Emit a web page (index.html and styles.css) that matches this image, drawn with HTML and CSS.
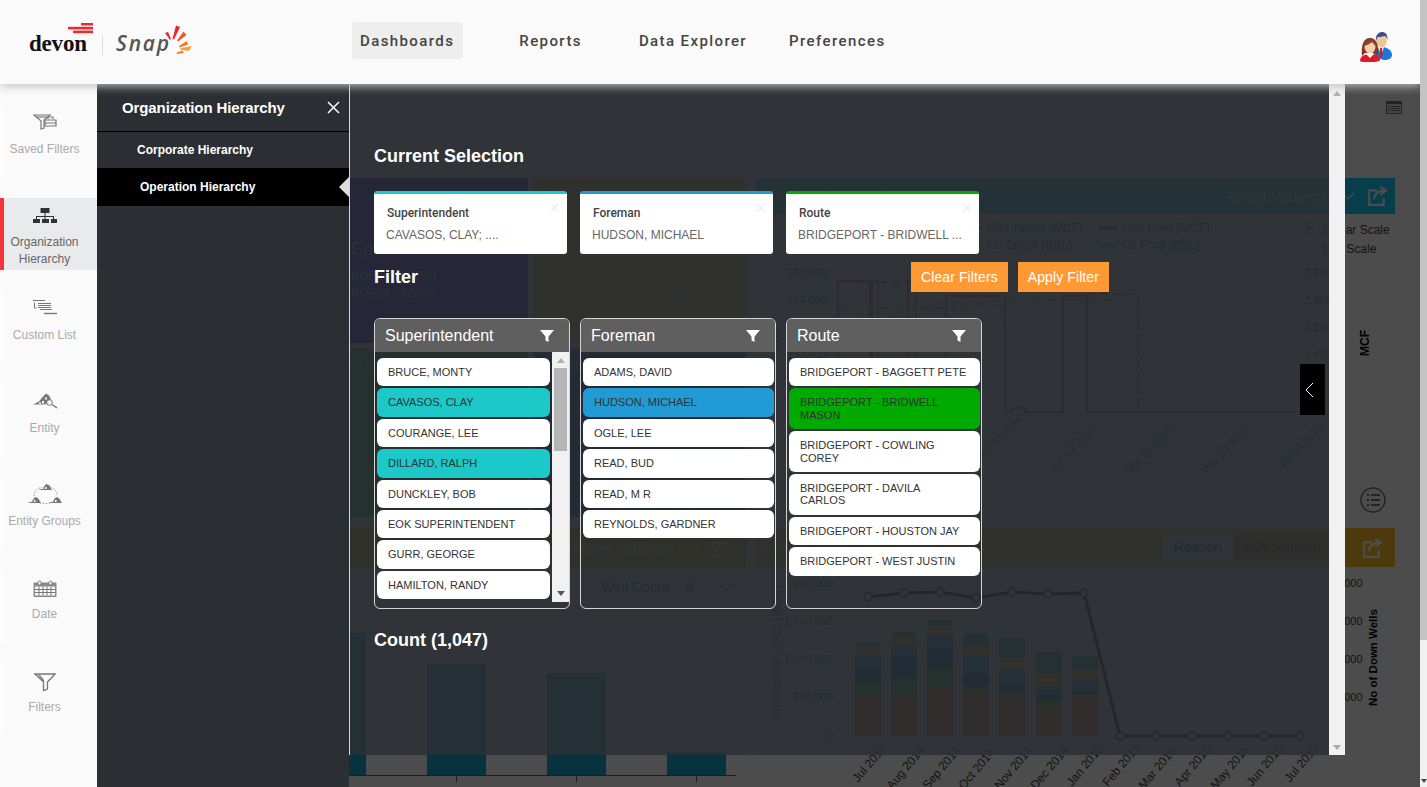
FILE: index.html
```html
<!DOCTYPE html>
<html lang="en">
<head>
  <meta charset="UTF-8">
  <title>Devon Snap</title>
  <link rel="stylesheet" href="styles.css">
</head>
<body>

<div class="app">
  <header class="topbar">
    <div class="logo">
      <div class="logo-devon">
        <svg class="logo-bars" width="26" height="11" viewBox="69 23 26 11">
          <rect x="82" y="23" width="12" height="2.5" fill="#ee2a2e"/>
          <rect x="69" y="26.8" width="25" height="2.6" fill="#ee2a2e"/>
          <rect x="74" y="30.6" width="20" height="2.6" fill="#ee2a2e"/>
        </svg>
        <span>devon</span>
      </div>
      <div class="logo-sep"></div>
      <span class="logo-snap">Snap</span>
      <svg class="logo-burst" width="28" height="31" viewBox="164 25 28 31">
        <path d="M165 33l3-1 3 7-1 1z" fill="#e8262c"/>
        <path d="M176 25.500l4 1.500-6 12.500-1.500-.5z" fill="#e8262c"/>
        <path d="M183.500 31.500l3 3.500-8.500 6.500-1-1z" fill="#f4552c"/>
        <path d="M186.500 41l2 3.500-9 3-.5-1.500z" fill="#f77a2c"/>
        <path d="M191.500 46l-2.500 5-9-1.500v-1z" fill="#fb9a3c"/>
        <path d="M183 50.500l.5 2.500-6.500 1-.5-1.500z" fill="#f77a2c"/>
      </svg>
    </div>
    <nav class="nav">
      <a class="nav-item active">Dashboards</a>
      <a class="nav-item nav-reports">Reports</a>
      <a class="nav-item nav-explorer">Data Explorer</a>
      <a class="nav-item nav-prefs">Preferences</a>
    </nav>
    <svg class="user-icon" width="34" height="32" viewBox="0 0 34 32">
      <path d="M14 26c0-7 4-10 8-10 6 0 11 3 11 8 0 3-3 5-8 5z" fill="#1f78d8"/>
      <path d="M19 16l3 9 3-9z" fill="#f2f2f2"/>
      <path d="M21 17h2l.6 8-1.600 2-1.600-2z" fill="#c8202c"/>
      <ellipse cx="22.500" cy="10" rx="5.200" ry="6.400" fill="#eec68f"/>
      <path d="M17 10c-1-6 3-9 6-9s6 2 5.500 8c-1-3-2-4-3-4-3 1-6 1-7 1z" fill="#3d4a8c"/>
      <path d="M1 30c0-5 5-7 10-7s10 2 10 6c0 1.500-4 2-10 2s-10 0-10-1z" fill="#e01a22"/>
      <path d="M7 23l4 4 4-4-4-1z" fill="#fff"/>
      <path d="M3 25c-1-10 1-18 8-18s9 8 8 18l-3-3H6z" fill="#7d3a22"/>
      <ellipse cx="11" cy="16" rx="5.500" ry="6.500" fill="#f7cdb0"/>
      <path d="M5 15c0-5 3-7 6-7s6 2 6 7c-2-1-3-3-4-4-2 2-5 3-8 4z" fill="#8c4226"/>
    </svg>
  </header>

  <main class="main">
    <aside class="sidebar">
      <a class="side-item">
        <svg class="side-icon" width="24" height="18" viewBox="0 0 24 18" fill="none" stroke="#777" stroke-width="1.200">
          <path d="M1 2h16l-6 5v8l-3 1V8z"/>
          <path d="M4 4h10"/>
          <path d="M12 7h11v6H12z" fill="#fafafa"/>
          <path d="M15 6V4h5v2M12 10h11"/>
        </svg>
        <span>Saved Filters</span>
      </a>
      <a class="side-item active">
        <svg class="side-icon" width="26" height="16" viewBox="0 0 26 16" fill="#333">
          <rect x="8.500" y="1" width="9" height="5"/>
          <rect x="1" y="12" width="7" height="4"/>
          <rect x="10" y="12" width="7" height="4"/>
          <rect x="19" y="12" width="6" height="4"/>
          <path d="M12.500 6h1v3h8.500v3h-1v-2h-7.500v2h-1v-2H5v2H4V9h8.500z"/>
        </svg>
        <span>Organization Hierarchy</span>
      </a>
      <a class="side-item">
        <svg class="side-icon" width="26" height="16" viewBox="0 0 26 16" fill="none" stroke="#777" stroke-width="1">
          <path d="M1 .5h12M2.500 2.500v5.500h2M6 3.500h13M6 5.500h13M6 7.500h13M8 9.500h12"/>
          <path d="M12 13.500h13" stroke-width="1.400"/>
        </svg>
        <span>Custom List</span>
      </a>
      <a class="side-item">
        <svg class="side-icon" width="26" height="17" viewBox="0 0 26 17">
          <path d="M1 12l6-3 4-5 3-3 3 2 2 4-2 1 1 3-6 1H7z" fill="#777"/>
          <path d="M7 10h2v1.500H7zM10 8.500h2V11h-2zM13 5h2v2h-2z" fill="#fafafa"/>
          <circle cx="17.500" cy="10" r="2.800" fill="#fafafa" stroke="#777"/>
          <path d="M20 12l5 3.500" stroke="#777" stroke-width="1.500"/>
        </svg>
        <span>Entity</span>
      </a>
      <a class="side-item">
        <svg class="side-icon" width="34" height="22" viewBox="0 0 34 22">
          <path d="M6 13c0-6 5-8 8-9M22 4c3 1 7 3 7 9M25 19c-3 2-12 2-15 0" fill="none" stroke="#999" stroke-dasharray="1.500 1.500"/>
          <path d="M11 7l4-2 3-4 3 1 3 5z" fill="#777"/>
          <path d="M0 20l4-2 3-4 3 1 3 5z" fill="#777"/>
          <path d="M21 20l4-2 3-4 3 1 3 5z" fill="#777"/>
          <path d="M14 5h1.500v1H14zM17 4h1.500v2H17zM3 18h1.500v1H3zM6 17h1.500v2H6zM24 18h1.500v1H24zM27 17h1.500v2H27z" fill="#fafafa"/>
        </svg>
        <span>Entity Groups</span>
      </a>
      <a class="side-item">
        <svg class="side-icon side-icon-low" width="24" height="17" viewBox="0 0 24 17">
          <rect x="0.500" y="2" width="23" height="14.500" rx="1" fill="#8a8a8a"/>
          <path d="M2 6h20v9H2z" fill="#fafafa"/>
          <path d="M2 9h20M2 12h20M6 6v9M10 6v9M14 6v9M18 6v9" stroke="#777"/>
          <rect x="5" y="0.500" width="3" height="4" rx="1.500" fill="#fafafa" stroke="#777"/>
          <rect x="16" y="0.500" width="3" height="4" rx="1.500" fill="#fafafa" stroke="#777"/>
        </svg>
        <span>Date</span>
      </a>
      <a class="side-item">
        <svg class="side-icon side-icon-low" width="22" height="18" viewBox="0 0 22 18" fill="none" stroke="#777" stroke-width="1.300">
          <path d="M1 1h20l-7.500 8v7l-4 1.500V9z"/>
          <path d="M5 2l5 6"/>
        </svg>
        <span>Filters</span>
      </a>
    </aside>

    <section class="drawer">
      <div class="drawer-head">
        <h3>Organization Hierarchy</h3>
        <svg width="13" height="13" viewBox="0 0 13 13" stroke="#fff" stroke-width="1.500"><path d="M1 1l11 11M12 1L1 12"/></svg>
      </div>
      <a class="drawer-link">Corporate Hierarchy</a>
      <a class="drawer-link active">Operation Hierarchy</a>
    </section>

    <section class="stage">
      <div class="dashboard">
        <svg class="toolbar-icon" width="16" height="13" viewBox="0 0 16 13">
          <rect width="16" height="13" rx="1" fill="#777"/>
          <path d="M1 3h14v9H1z" fill="#e6e6e6"/>
          <path d="M5 5.500h9M5 7.500h9M5 9.500h9M2 5.500h2M2 7.500h2M2 9.500h2" stroke="#777"/>
        </svg>
        <div class="dash-columns">
          <div class="dash-left">
            <div class="tiles">
              <div class="tile tile-purple">
                <div class="tile-big">Epd</div>
                <div class="tile-small">BOEpd (-390%)</div>
                <div class="tile-small">BOEpd (-402%)</div>
              </div>
              <div class="tile tile-olive">
                <div class="tile-title">Wells by Current Status</div>
                <div class="tile-row"><span>Stopped</span></div>
                <div class="tile-row"><span>Shut-In</span><u>394</u></div>
                <div class="tile-row"><span>TA</span><u>66</u></div>
              </div>
              <div class="tile tile-green">
                <div class="tile-big">duction</div>
                <div class="tile-lines">From<br>From</div>
              </div>
              <div class="tile tile-blue">
                <div class="tile-title">Plunger</div>
              </div>
            </div>
            <div class="band band-brown">
              <span>Target Variance</span>
              <svg class="band-chevron" width="12" height="8" viewBox="0 0 12 8" fill="none" stroke="#fff" stroke-width="1.200"><path d="M1 1l5 5 5-5"/></svg>
              <svg width="18" height="18" viewBox="0 0 18 18" fill="none" stroke="#fff" stroke-width="2"><path d="M9 4H2v13h13v-6M6 12c1-5 4-8 10-8M12 1l5 3-5 4"/></svg>
            </div>
            <div class="well-count">
              <span>Well Count</span>
              <span class="well-num">5</span>
              <svg class="well-chevron" width="14" height="8" viewBox="0 0 14 8" fill="none" stroke="#777" stroke-width="1.200"><path d="M1 1l6 6 6-6"/></svg>
            </div>
            <svg class="bar-chart" width="397" height="187" viewBox="349 600 397 187">
              <path d="M349 620H735M349 651H735M349 682H735M349 713H735M349 744H735" stroke="#ddd"/>
              <g fill="#17acd3">
                <rect x="349" y="633" width="17" height="142"/>
                <rect x="427" y="664" width="59" height="111"/>
                <rect x="547" y="673" width="59" height="102"/>
                <rect x="667" y="752" width="59" height="23"/>
              </g>
              <path d="M349 775.500H736M456.500 775V782M576.500 775V782M696.500 775V782" stroke="#666"/>
            </svg>
          </div>

          <div class="dash-right">
            <div class="band band-teal">
              <span class="band-title">Daily Volume Analysis</span>
              <span class="band-variance">Target Variance</span>
              <svg width="14" height="8" viewBox="0 0 14 8" fill="none" stroke="#fff" stroke-width="1.200"><path d="M1 1l6 6 6-6"/></svg>
              <svg width="20" height="20" viewBox="0 0 18 18" fill="none" stroke="#fff" stroke-width="2"><path d="M9 4H2v13h13v-6M6 12c1-5 4-8 10-8M12 1l5 3-5 4"/></svg>
            </div>
            <svg class="chart chart-top" width="639" height="314" viewBox="756 214 639 314">
              <path d="M838 273H1290M838 300H1290M838 327H1290M838 354H1290M838 381H1290M838 412H1290" stroke="#e2e2e2"/>
              <path d="M882 273V412M938 273V412M1000 273V412M1076 273V412M1138 273V412M1214 273V412M1290 273V412" stroke="#e8e8e8"/>
              <g class="axis">
                <text x="787" y="277">330,000</text>
                <text x="787" y="304">264,000</text>
                <text x="787" y="358">132,000</text>
                <text x="1304" y="277">3,500</text>
                <text x="1304" y="304">2,800</text>
                <text x="1304" y="331">2,100</text>
                <text x="1304" y="358">1,400</text>
              </g>
              <text class="axis-bold" transform="translate(1369 356) rotate(-90)">MCF</text>
              <text class="axis-big" transform="translate(779 352) rotate(-90)">BOE</text>
              <path d="M838 412V281H870V412H872V281H878V412H908V281H916V412H946V296H1005V412H1012V408H1025V412H1063V296H1087V412H1294" fill="none" stroke="#ff2a4a" stroke-width="2"/>
              <path d="M840 282H1005M1087 294H1138V412" fill="none" stroke="#ff2a4a" stroke-width="2" stroke-dasharray="8 5"/>
              <path d="M838 308H950L1000 300H1110L1138 287" fill="none" stroke="#7fd040" stroke-width="2" stroke-dasharray="8 6"/>
              <path d="M838 340L860 312 880 320 950 300 965 306 975 302 985 308 1000 305 1005 330" fill="none" stroke="#7fd040"/>
              <g class="legend">
                <rect x="978" y="226" width="4" height="4" fill="#ff2a4a"/>
                <text x="987" y="232">Gas Target (MCF)</text>
                <rect x="1098" y="226" width="20" height="4" fill="#ff2a4a"/>
                <text x="1122" y="232">Gas Prod (MCF)</text>
                <text x="987" y="249">Oil Target (BBL)</text>
                <rect x="1098" y="243" width="20" height="4" fill="#7fd040"/>
                <text x="1122" y="249">Oil Prod (BBL)</text>
              </g>
              <path d="M1293 222V254" stroke="#ccc"/>
              <circle cx="1309" cy="228" r="5" fill="#fff" stroke="#aaa"/>
              <circle cx="1309" cy="228" r="2.500" fill="#666"/>
              <circle cx="1309" cy="248" r="5" fill="#fff" stroke="#aaa"/>
              <g class="legend">
                <text x="1323" y="234">Linear Scale</text>
                <text x="1323" y="253">Log Scale</text>
              </g>
              <g class="axis">
                <text transform="translate(979 463) rotate(-45)">Nov 02 2014</text>
                <text transform="translate(1054 472) rotate(-45)">Jan 02 2015</text>
                <text transform="translate(1130 475) rotate(-45)">Mar 03 2015</text>
                <text transform="translate(1205 475) rotate(-45)">May 03 2015</text>
                <text transform="translate(1283 468) rotate(-45)">Jul 03 2015</text>
              </g>
              <circle cx="1373" cy="500" r="12" fill="none" stroke="#777" stroke-width="1.500"/>
              <path d="M1367 495h2M1367 500h2M1367 505h2M1371 495h9M1371 500h9M1371 505h9" stroke="#777" stroke-width="2"/>
            </svg>

            <div class="band band-gold">
              <span class="band-title">Down Wells</span>
              <div class="toggle">
                <span class="toggle-on">Reason</span>
                <span class="toggle-off">Sub Reason</span>
              </div>
              <svg width="20" height="20" viewBox="0 0 18 18" fill="none" stroke="#fff" stroke-width="2"><path d="M9 4H2v13h13v-6M6 12c1-5 4-8 10-8M12 1l5 3-5 4"/></svg>
            </div>
            <svg class="chart" width="639" height="220" viewBox="756 567 639 220">
              <path d="M850 583H1330M850 621H1330M850 659H1330M850 697H1330M850 736H1330" stroke="#e2e2e2"/>
              <g class="axis axis-end">
                <text x="833" y="587">2,000,000</text>
                <text x="833" y="625">1,500,000</text>
                <text x="833" y="663">1,000,000</text>
                <text x="833" y="701">500,000</text>
                <text x="833" y="739">0</text>
              </g>
              <g class="axis">
                <text x="1335" y="587">2,000</text>
                <text x="1335" y="625">1,000</text>
                <text x="1335" y="663">1,000</text>
                <text x="1335" y="701">1,000</text>
              </g>
              <text class="axis-big" transform="translate(781 720) rotate(-90)">Production Loss (BOE)</text>
              <text class="axis-bold axis-wells" transform="translate(1377 706) rotate(-90)">No of Down Wells</text>
              <g class="seg-a">
                <rect x="855" y="642" width="26" height="5"/><rect x="891" y="632" width="26" height="4"/><rect x="927" y="620" width="26" height="5"/><rect x="963" y="634" width="26" height="11"/><rect x="999" y="638" width="26" height="19"/><rect x="1036" y="652" width="26" height="21"/><rect x="1072" y="656" width="26" height="13"/>
              </g>
              <g class="seg-b">
                <rect x="855" y="647" width="26" height="9"/><rect x="891" y="636" width="26" height="10"/><rect x="927" y="625" width="26" height="11"/><rect x="963" y="645" width="26" height="11"/><rect x="999" y="657" width="26" height="13"/><rect x="1036" y="673" width="26" height="14"/><rect x="1072" y="669" width="26" height="11"/>
              </g>
              <g class="seg-c">
                <rect x="855" y="656" width="26" height="13"/><rect x="891" y="646" width="26" height="10"/><rect x="927" y="636" width="26" height="12"/><rect x="963" y="656" width="26" height="17"/><rect x="999" y="670" width="26" height="15"/><rect x="1036" y="687" width="26" height="8"/><rect x="1072" y="680" width="26" height="11"/>
              </g>
              <g class="seg-d">
                <rect x="855" y="669" width="26" height="13"/><rect x="891" y="656" width="26" height="22"/><rect x="927" y="648" width="26" height="20"/><rect x="963" y="673" width="26" height="14"/><rect x="999" y="685" width="26" height="6"/><rect x="1036" y="695" width="26" height="5"/><rect x="1072" y="691" width="26" height="3"/>
              </g>
              <g class="seg-e">
                <rect x="855" y="682" width="26" height="15"/><rect x="891" y="678" width="26" height="19"/><rect x="927" y="668" width="26" height="20"/><rect x="963" y="687" width="26" height="4"/><rect x="999" y="691" width="26" height="6"/><rect x="1036" y="700" width="26" height="7"/><rect x="1072" y="694" width="26" height="3"/>
              </g>
              <g class="seg-f">
                <rect x="855" y="697" width="26" height="39"/><rect x="891" y="697" width="26" height="39"/><rect x="927" y="688" width="26" height="48"/><rect x="963" y="691" width="26" height="45"/><rect x="999" y="697" width="26" height="39"/><rect x="1036" y="707" width="26" height="29"/><rect x="1072" y="697" width="26" height="39"/>
              </g>
              <path d="M868 597L904 593 940 592 976 598 1012 592 1048 594 1084 593 1120 736H1300" fill="none" stroke="#111" stroke-width="3"/>
              <g class="dots">
                <circle cx="868" cy="597" r="4"/><circle cx="904" cy="593" r="4"/><circle cx="940" cy="592" r="4"/><circle cx="976" cy="598" r="4"/><circle cx="1012" cy="592" r="4"/><circle cx="1048" cy="594" r="4"/><circle cx="1084" cy="593" r="4"/><circle cx="1120" cy="736" r="4"/><circle cx="1156" cy="736" r="4"/><circle cx="1192" cy="736" r="4"/><circle cx="1228" cy="736" r="4"/><circle cx="1264" cy="736" r="4"/><circle cx="1300" cy="736" r="4"/>
              </g>
              <g class="axis months">
                <text transform="translate(858 783) rotate(-50)">Jul 2014</text>
                <text transform="translate(892 790) rotate(-50)">Aug 2014</text>
                <text transform="translate(928 790) rotate(-50)">Sep 2014</text>
                <text transform="translate(964 790) rotate(-50)">Oct 2014</text>
                <text transform="translate(1000 790) rotate(-50)">Nov 2014</text>
                <text transform="translate(1036 790) rotate(-50)">Dec 2014</text>
                <text transform="translate(1072 787) rotate(-50)">Jan 2015</text>
                <text transform="translate(1108 787) rotate(-50)">Feb 2015</text>
                <text transform="translate(1144 790) rotate(-50)">Mar 2015</text>
                <text transform="translate(1180 787) rotate(-50)">Apr 2015</text>
                <text transform="translate(1216 790) rotate(-50)">May 2015</text>
                <text transform="translate(1252 787) rotate(-50)">Jun 2015</text>
                <text transform="translate(1290 783) rotate(-50)">Jul 2015</text>
              </g>
            </svg>
          </div>
        </div>
      </div>

      <div class="dim"></div>

      <div class="modal">
        <div class="modal-body">
          <h2 class="modal-title">Current Selection</h2>
          <div class="selection-row">
            <div class="sel-card sel-teal">
              <span class="sel-x">&times;</span>
              <div class="sel-label">Superintendent</div>
              <div class="sel-value">CAVASOS, CLAY; ....</div>
            </div>
            <div class="sel-card sel-blue">
              <span class="sel-x">&times;</span>
              <div class="sel-label">Foreman</div>
              <div class="sel-value">HUDSON, MICHAEL</div>
            </div>
            <div class="sel-card sel-green">
              <span class="sel-x">&times;</span>
              <div class="sel-label">Route</div>
              <div class="sel-value">BRIDGEPORT - BRIDWELL ...</div>
            </div>
          </div>

          <div class="filter-bar">
            <h2 class="modal-title">Filter</h2>
            <div class="filter-actions">
              <button class="btn-orange">Clear Filters</button>
              <button class="btn-orange">Apply Filter</button>
            </div>
          </div>

          <div class="panels">
            <div class="panel">
              <div class="panel-head">
                <span>Superintendent</span>
                <svg width="14" height="12" viewBox="0 0 14 12" fill="#fff"><path d="M0 0h14L8.500 6.500V12L5.500 10.500V6.500z"/></svg>
              </div>
              <div class="panel-body">
                <ul class="pick-list">
                  <li>BRUCE, MONTY</li>
                  <li class="on-teal">CAVASOS, CLAY</li>
                  <li>COURANGE, LEE</li>
                  <li class="on-teal">DILLARD, RALPH</li>
                  <li>DUNCKLEY, BOB</li>
                  <li>EOK SUPERINTENDENT</li>
                  <li>GURR, GEORGE</li>
                  <li>HAMILTON, RANDY</li>
                </ul>
                <div class="list-scroll">
                  <i class="arrow-up"></i>
                  <div class="list-thumb"></div>
                  <i class="arrow-down"></i>
                </div>
              </div>
            </div>

            <div class="panel">
              <div class="panel-head">
                <span>Foreman</span>
                <svg width="14" height="12" viewBox="0 0 14 12" fill="#fff"><path d="M0 0h14L8.500 6.500V12L5.500 10.500V6.500z"/></svg>
              </div>
              <div class="panel-body">
                <ul class="pick-list">
                  <li>ADAMS, DAVID</li>
                  <li class="on-blue">HUDSON, MICHAEL</li>
                  <li>OGLE, LEE</li>
                  <li>READ, BUD</li>
                  <li>READ, M R</li>
                  <li>REYNOLDS, GARDNER</li>
                </ul>
              </div>
            </div>

            <div class="panel">
              <div class="panel-head">
                <span>Route</span>
                <svg width="14" height="12" viewBox="0 0 14 12" fill="#fff"><path d="M0 0h14L8.500 6.500V12L5.500 10.500V6.500z"/></svg>
              </div>
              <div class="panel-body">
                <ul class="pick-list">
                  <li>BRIDGEPORT - BAGGETT PETE</li>
                  <li class="on-green">BRIDGEPORT - BRIDWELL MASON</li>
                  <li>BRIDGEPORT - COWLING COREY</li>
                  <li>BRIDGEPORT - DAVILA CARLOS</li>
                  <li>BRIDGEPORT - HOUSTON JAY</li>
                  <li>BRIDGEPORT - WEST JUSTIN</li>
                </ul>
              </div>
            </div>
          </div>

          <h2 class="modal-title count-title">Count (1,047)</h2>

          <a class="collapse-tab">
            <svg width="9" height="16" viewBox="0 0 9 16" fill="none" stroke="#fff" stroke-width="1"><path d="M8 1L1 8l7 7"/></svg>
          </a>
        </div>
        <div class="modal-scroll">
          <i class="arrow-up"></i>
          <i class="arrow-down"></i>
        </div>
      </div>
    </section>
  </main>
</div>

<div class="page-scroll">
  <div class="page-thumb"></div>
  <i class="page-arrow"></i>
</div>

</body>
</html>
```

FILE: styles.css
```css
* {
  box-sizing: border-box;
}
html, body {
  margin: 0;
  height: 787px;
  overflow: hidden;
}
body {
  display: flex;
  font-family: "Liberation Sans", Arial, sans-serif;
  background: #fafafa;
}
.app {
  width: 1420px;
  display: flex;
  flex-direction: column;
}

/* top bar */
.topbar {
  height: 84px;
  flex: none;
  display: flex;
  align-items: flex-start;
  background: #fafafa;
  box-shadow: 0 2px 9px #c0c0c0;
  position: relative;
  z-index: 5;
}
.logo {
  width: 352px;
  height: 84px;
  padding: 23px 0 0 29px;
  display: flex;
  align-items: flex-start;
}
.logo-devon {
  width: 65px;
  display: flex;
  flex-direction: column;
  align-items: flex-end;
}
.logo-bars {
  display: block;
}
.logo-devon span {
  font-family: "Liberation Serif", serif;
  font-weight: bold;
  font-size: 23px;
  line-height: 20px;
  color: #111;
  letter-spacing: -0.2px;
  width: 65px;
}
.logo-sep {
  width: 1px;
  height: 20px;
  background: #ddd;
  margin: 12px 13px 0 8px;
}
.logo-snap {
  font-family: "Open Sans", sans-serif;
  font-style: italic;
  font-weight: 600;
  font-size: 21px;
  line-height: 28px;
  margin-top: 6px;
  letter-spacing: 1.800px;
  color: #555;
  width: 48px;
}
.logo-burst {
  margin-top: 2px;
}
.nav {
  display: flex;
  margin-top: 22px;
}
.nav-item {
  height: 37px;
  padding: 0 9px 0 8px;
  border-radius: 3px;
  font-family: Roboto, sans-serif;
  font-weight: 500;
  font-size: 15px;
  line-height: 39px;
  letter-spacing: 1.400px;
  color: #444;
}
.nav-item.active {
  background: #eee;
}
.nav-reports {
  margin-left: 48px;
}
.nav-explorer {
  margin-left: 40px;
}
.nav-prefs {
  margin-left: 25px;
}
.user-icon {
  margin: 31px 27px 0 auto;
}

.main {
  flex: 1;
  display: flex;
  min-height: 0;
}

/* left icon rail */
.sidebar {
  width: 97px;
  flex: none;
  padding-top: 21px;
  display: flex;
  flex-direction: column;
  gap: 21px;
  background: #fafafa;
}
.side-item {
  height: 72px;
  border-left: 4px solid #fdfdfd;
  padding-right: 12px;
  display: flex;
  flex-direction: column;
  align-items: center;
  font-size: 12px;
  line-height: 17px;
  color: #aaa;
  text-align: center;
}
.side-item .side-icon {
  height: 24px;
  margin: 5px 0 7px;
  flex: none;
}
.side-item .side-icon-low {
  margin: 7px 0 5px;
}
.side-item.active {
  background: #e9eaec;
  border-left-color: #f5333a;
  color: #666;
}

/* hierarchy drawer */
.drawer {
  width: 252px;
  flex: none;
  background: #2b2e33;
  color: #fff;
}
.drawer-head {
  height: 48px;
  border-bottom: 1px solid #000;
  display: flex;
  align-items: center;
  justify-content: space-between;
  padding: 0 9px 0 25px;
}
.drawer-head h3 {
  margin: 0;
  font-size: 15px;
  font-weight: bold;
  letter-spacing: -0.100px;
}
.drawer-link {
  display: block;
  height: 36px;
  line-height: 37px;
  padding-left: 40px;
  font-size: 12px;
  font-weight: bold;
  position: relative;
}
.drawer-link.active {
  height: 38px;
  line-height: 38px;
  background: #000;
  padding-left: 43px;
}
.drawer-link.active::after {
  content: "";
  position: absolute;
  right: 0;
  top: 9px;
  border: 10px solid transparent;
  border-left: 0;
  border-right-color: #ddd;
}

/* dashboard behind the modal */
.stage {
  flex: 1;
  position: relative;
  overflow: hidden;
}
.dashboard {
  height: 703px;
  background: #fafafa;
  position: relative;
}
.toolbar-icon {
  position: absolute;
  top: 17px;
  right: 18px;
}
.dash-columns {
  display: flex;
  gap: 10px;
  padding-top: 94px;
}
.dash-left {
  width: 397px;
  flex: none;
}
.dash-right {
  width: 639px;
  flex: none;
}
.tiles {
  display: grid;
  grid-template-columns: 179px 213px;
  grid-template-rows: 165px 169px;
  column-gap: 5px;
  row-gap: 5px;
  height: 339px;
  margin-bottom: 11px;
}
.tile {
  color: #bbb;
  padding: 4px 8px;
  overflow: hidden;
  white-space: nowrap;
}
.tile-purple {
  background: #2b00ff;
  padding: 61px 0 0 2px;
}
.tile-olive {
  background: #ffb030;
}
.tile-green {
  background: #2bbe3c;
  padding: 6px 0 0 0;
}
.tile-blue {
  background: #0064c8;
  padding-left: 20px;
  padding-top: 6px;
}
.tile-big {
  font-size: 18px;
  margin-bottom: 8px;
}
.tile-small {
  font-size: 12px;
  line-height: 17px;
}
.tile-title {
  font-size: 18px;
  line-height: 22px;
  margin-bottom: 27px;
}
.tile-row {
  display: flex;
  font-size: 15px;
  line-height: 25px;
  padding-left: 12px;
}
.tile-row span {
  width: 119px;
}
.tile-lines {
  font-size: 12px;
  line-height: 14px;
  margin: 88px 0 0 15px;
}
.band {
  display: flex;
  align-items: center;
  color: #fff;
  font-size: 15px;
}
.band-brown {
  height: 39px;
  background: #ffaa10;
  justify-content: flex-end;
  padding-right: 18px;
}
.band-chevron {
  margin: 0 10px 0 14px;
}
.band-teal {
  height: 36px;
  background: #17cffd;
  gap: 12px;
  padding: 0 8px 0 14px;
}
.band-gold {
  height: 39px;
  background: #ffbe28;
  padding: 0 13px 0 8px;
}
.band-title {
  font-size: 18px;
  color: #ccc;
  margin-right: auto;
}
.toggle {
  display: flex;
  font-size: 14px;
  margin-right: 32px;
  color: #222;
}
.toggle-on {
  width: 70px;
  height: 25px;
  line-height: 25px;
  text-align: center;
  background: #fff;
}
.toggle-off {
  width: 97px;
  height: 25px;
  line-height: 25px;
  text-align: center;
  background: #c8961c;
  color: #444;
}
.well-count {
  height: 33px;
  display: flex;
  align-items: center;
  padding: 6px 0 0 252px;
  font-size: 14px;
  color: #444;
  background: #fff;
}
.well-num {
  margin-left: 16px;
}
.well-chevron {
  margin-left: 26px;
}
.bar-chart, .chart {
  display: block;
  background: #fff;
}
.chart-top {
  height: 314px;
}
.axis text {
  font-size: 11px;
  fill: #444;
}
.axis-end text {
  text-anchor: end;
}
.months text {
  font-size: 12px;
}
.axis-bold {
  font-size: 12px;
  font-weight: bold;
  fill: #000;
}
.axis-wells {
  font-size: 11.500px;
}
.axis-big {
  font-size: 12px;
  fill: #555;
  letter-spacing: 0.600px;
}
.legend text {
  font-size: 12px;
  fill: #444;
}
.seg-a rect { fill: #14aa82; }
.seg-b rect { fill: #ffbe1e; }
.seg-c rect { fill: #1496dc; }
.seg-d rect { fill: #0a5ac8; }
.seg-e rect { fill: #14be28; }
.seg-f rect { fill: #ff6e1e; }
.dots circle {
  fill: #fff;
  stroke: #111;
  stroke-width: 1.500;
}
.dim {
  position: absolute;
  inset: 0;
  background: rgba(0, 0, 0, 0.7);
}

/* selection modal */
.modal {
  position: absolute;
  top: 0;
  left: 0;
  width: 996px;
  height: 671px;
  display: flex;
  border-left: 1px solid #d8d8d8;
}
.modal-body {
  flex: 1;
  padding: 62px 0 0 24px;
  background: rgba(43, 47, 52, 0.82);
  position: relative;
}
.modal-title {
  margin: 0;
  font-size: 18px;
  line-height: 21px;
  font-weight: bold;
  color: #fff;
}
.selection-row {
  display: flex;
  gap: 13px;
  margin-top: 24px;
}
.sel-card {
  width: 193px;
  height: 63px;
  border-top: 3px solid #ccc;
  border-radius: 3px;
  background: #fff;
  padding: 11px 13px 0;
  position: relative;
}
.sel-teal { border-top-color: #1cc8c8; }
.sel-blue { border-top-color: #229ad6; }
.sel-green { border-top-color: #00aa00; }
.sel-x {
  position: absolute;
  right: 7px;
  top: 5px;
  font-size: 18px;
  line-height: 18px;
  color: #eee;
}
.sel-label {
  font-family: Roboto, sans-serif;
  font-weight: 500;
  font-size: 12px;
  line-height: 16px;
  color: #444;
}
.sel-value {
  font-size: 12px;
  line-height: 16px;
  margin: 6px 0 0 -1px;
  color: #666;
  white-space: nowrap;
  overflow: hidden;
}
.filter-bar {
  width: 735px;
  height: 30px;
  margin-top: 8px;
  display: flex;
  align-items: center;
  justify-content: space-between;
}
.filter-actions {
  display: flex;
  gap: 10px;
}
.btn-orange {
  height: 30px;
  padding: 0 10px;
  border: 0;
  background: #ff9933;
  color: #fff;
  font-family: "Liberation Sans", Arial, sans-serif;
  font-size: 14px;
  letter-spacing: 0.100px;
}
.panels {
  display: flex;
  gap: 10px;
  margin-top: 26px;
}
.panel {
  width: 196px;
  height: 291px;
  border: 1px solid #d5d5d5;
  border-radius: 6px;
  overflow: hidden;
}
.panel-head {
  height: 33px;
  background: #5f5f5f;
  color: #fff;
  font-size: 16px;
  display: flex;
  align-items: center;
  justify-content: space-between;
  padding: 0 15px 0 10px;
}
.panel-body {
  height: 250px;
  display: flex;
}
.pick-list {
  flex: 1;
  list-style: none;
  margin: 0;
  padding: 6px 1px 0 2px;
  display: flex;
  flex-direction: column;
  gap: 2px;
}
.pick-list li {
  padding: 8px 13px 8px 11px;
  border-radius: 6px;
  background: #fff;
  font-size: 11px;
  line-height: 12.400px;
  color: #333;
}
.pick-list li.on-teal { background: #1cc8c8; }
.pick-list li.on-blue { background: #229ad6; }
.pick-list li.on-green { background: #00aa00; }
.list-scroll {
  width: 17px;
  flex: none;
  margin-left: 1px;
  background: #f1f1f1;
  display: flex;
  flex-direction: column;
  align-items: center;
  padding-top: 6px;
}
.list-thumb {
  width: 13px;
  height: 83px;
  background: #b5b5b5;
  margin-top: 5px;
}
.list-scroll .arrow-down {
  margin-top: auto;
  margin-bottom: 6px;
}
.arrow-up, .arrow-down {
  display: block;
  width: 0;
  height: 0;
  border: 4px solid transparent;
  flex: none;
}
.arrow-up {
  border-top: 0;
  border-bottom: 5px solid #b0b0b0;
}
.arrow-down {
  border-bottom: 0;
  border-top: 5px solid #555;
}
.count-title {
  margin-top: 21px;
}
.collapse-tab {
  position: absolute;
  right: 4px;
  top: 280px;
  width: 25px;
  height: 51px;
  background: #000;
  display: flex;
  align-items: center;
  padding-left: 5px;
}
.modal-scroll {
  width: 16px;
  flex: none;
  background: #f1f1f1;
  display: flex;
  flex-direction: column;
  align-items: center;
  justify-content: space-between;
  padding: 7px 0 5px;
}
.modal-scroll .arrow-down {
  border-top-color: #aaa;
}

/* page scrollbar */
.page-scroll {
  width: 7px;
  flex: none;
  background: #f1f1f1;
  position: relative;
}
.page-thumb {
  height: 640px;
  background: #c4c4c4;
}
.page-arrow {
  position: absolute;
  left: 1px;
  bottom: 4px;
  width: 0;
  height: 0;
  border: 3px solid transparent;
  border-bottom: 0;
  border-top: 4px solid #444;
}
```
